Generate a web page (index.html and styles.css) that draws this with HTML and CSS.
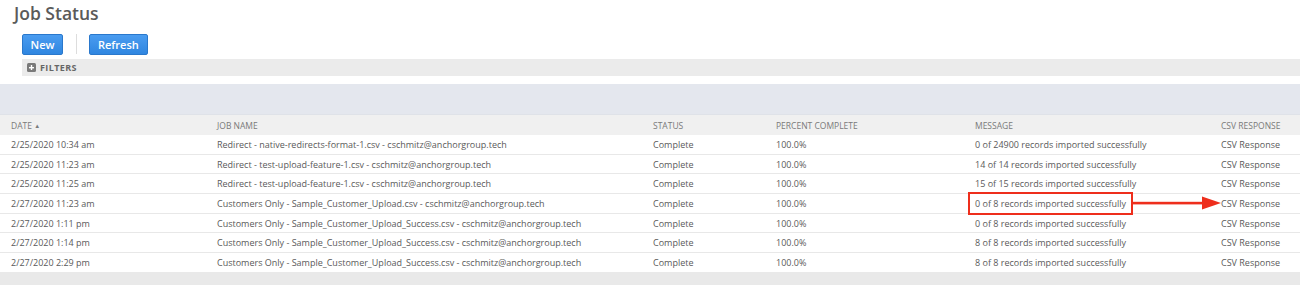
FILE: index.html
```html
<!DOCTYPE html>
<html>
<head>
<meta charset="utf-8">
<link rel="stylesheet" href="styles.css">
</head>
<body>
<div class="page">
  <h1 class="title">Job Status</h1>
  <div class="toolbar">
    <button class="btn">New</button>
    <span class="sep"></span>
    <button class="btn">Refresh</button>
  </div>
  <div class="filters">
    <svg class="plus" width="9" height="9" viewBox="0 0 9 9"><rect x="0" y="0" width="9" height="9" rx="1.5" fill="#7a7a7a"/><rect x="2" y="4" width="5" height="1.4" fill="#fff"/><rect x="3.8" y="2" width="1.4" height="5" fill="#fff"/></svg>
    <span>FILTERS</span>
  </div>
  <div class="band"></div>
  <table class="grid">
    <colgroup>
      <col class="c-date"><col class="c-job"><col class="c-status"><col class="c-pct"><col class="c-msg"><col class="c-csv">
    </colgroup>
    <thead>
      <tr><th>DATE <span class="sort">&#9650;</span></th><th>JOB NAME</th><th>STATUS</th><th>PERCENT COMPLETE</th><th>MESSAGE</th><th>CSV RESPONSE</th></tr>
    </thead>
    <tbody>
      <tr><td>2/25/2020 10:34 am</td><td>Redirect - native-redirects-format-1.csv - cschmitz@anchorgroup.tech</td><td>Complete</td><td>100.0%</td><td>0 of 24900 records imported successfully</td><td>CSV Response</td></tr>
      <tr><td>2/25/2020 11:23 am</td><td>Redirect - test-upload-feature-1.csv - cschmitz@anchorgroup.tech</td><td>Complete</td><td>100.0%</td><td>14 of 14 records imported successfully</td><td>CSV Response</td></tr>
      <tr><td>2/25/2020 11:25 am</td><td>Redirect - test-upload-feature-1.csv - cschmitz@anchorgroup.tech</td><td>Complete</td><td>100.0%</td><td>15 of 15 records imported successfully</td><td>CSV Response</td></tr>
      <tr><td>2/27/2020 11:23 am</td><td>Customers Only - Sample_Customer_Upload.csv - cschmitz@anchorgroup.tech</td><td>Complete</td><td>100.0%</td><td class="hl-cell"><span class="hl">0 of 8 records imported successfully<svg class="arrow" width="90" height="14" viewBox="0 0 90 14"><rect x="0" y="5.8" width="74" height="2.6" fill="#ee2e1c"/><polygon points="69,0.5 88,7 69,13.5" fill="#ee2e1c"/></svg></span></td><td>CSV Response</td></tr>
      <tr><td>2/27/2020 1:11 pm</td><td>Customers Only - Sample_Customer_Upload_Success.csv - cschmitz@anchorgroup.tech</td><td>Complete</td><td>100.0%</td><td>0 of 8 records imported successfully</td><td>CSV Response</td></tr>
      <tr><td>2/27/2020 1:14 pm</td><td>Customers Only - Sample_Customer_Upload_Success.csv - cschmitz@anchorgroup.tech</td><td>Complete</td><td>100.0%</td><td>8 of 8 records imported successfully</td><td>CSV Response</td></tr>
      <tr><td>2/27/2020 2:29 pm</td><td>Customers Only - Sample_Customer_Upload_Success.csv - cschmitz@anchorgroup.tech</td><td>Complete</td><td>100.0%</td><td>8 of 8 records imported successfully</td><td>CSV Response</td></tr>
    </tbody>
  </table>
  <div class="footer"></div>
</div>
</body>
</html>
```
FILE: styles.css
```css
html, body {
  margin: 0;
  padding: 0;
  background: #ffffff;
}
body {
  font-family: "Open Sans", "Liberation Sans", sans-serif;
  color: #555555;
  width: 1300px;
  height: 285px;
  overflow: hidden;
}
.page {
  display: flex;
  flex-direction: column;
}
.title {
  margin: 0;
  padding: 1px 0 0 14px;
  height: 33px;
  box-sizing: border-box;
  font-size: 17.5px;
  font-weight: 600;
  color: #5a5a5a;
  line-height: 24px;
}
.toolbar {
  display: flex;
  align-items: center;
  padding-left: 22px;
  height: 22px;
}
.btn {
  font-family: "Open Sans", "Liberation Sans", sans-serif;
  font-size: 11px;
  font-weight: 600;
  color: #ffffff;
  background: linear-gradient(#4a9cf0, #2f86e0);
  border: 1px solid #2a78cc;
  border-radius: 2px;
  height: 21px;
  padding: 0 8px;
  line-height: 19px;
}
.btn:first-child {
  width: 41px;
  padding: 0;
}
.sep {
  width: 1px;
  height: 20px;
  background: #dddddd;
  margin: 0 12px 0 13px;
}
.filters {
  margin: 4px 0 0 22px;
  height: 17px;
  background: #ebebeb;
  display: flex;
  align-items: center;
  padding-left: 5px;
  gap: 4px;
  font-size: 9px;
  font-weight: 700;
  color: #666666;
  letter-spacing: 0.4px;
}
.band {
  margin-top: 8px;
  height: 30px;
  background: #e4e7ee;
}
.grid {
  width: 1300px;
  border-collapse: collapse;
  table-layout: fixed;
  font-size: 9px;
}
.c-date { width: 206px; }
.c-job { width: 436px; }
.c-status { width: 123px; }
.c-pct { width: 199px; }
.c-msg { width: 246px; }
.c-csv { width: 90px; }
.grid th {
  background: #f0f0f0;
  height: 20px;
  padding: 0 0 0 11px;
  text-align: left;
  font-weight: 400;
  font-size: 8.5px;
  color: #7a7a7a;
  border-top: 1px solid #dfe2e8;
}
.grid th .sort {
  font-size: 6px;
  vertical-align: 1px;
}
.grid td {
  height: 18.7px;
  padding: 0 0 0 11px;
  white-space: nowrap;
  overflow: visible;
  color: #5a5a5a;
  border-bottom: 1px solid #e8e8e8;
}
.grid tbody tr:last-child td {
  border-bottom: none;
}
.hl-cell {
  position: relative;
}
.hl {
  position: relative;
}
.hl::after {
  content: "";
  position: absolute;
  left: -7px;
  right: -7px;
  top: -5px;
  bottom: -5px;
  border: 2.5px solid #ee2e1c;
}
.arrow {
  position: absolute;
  left: calc(100% + 7px);
  top: -1px;
}
.footer {
  height: 14px;
  background: #e9e9e9;
}
```
